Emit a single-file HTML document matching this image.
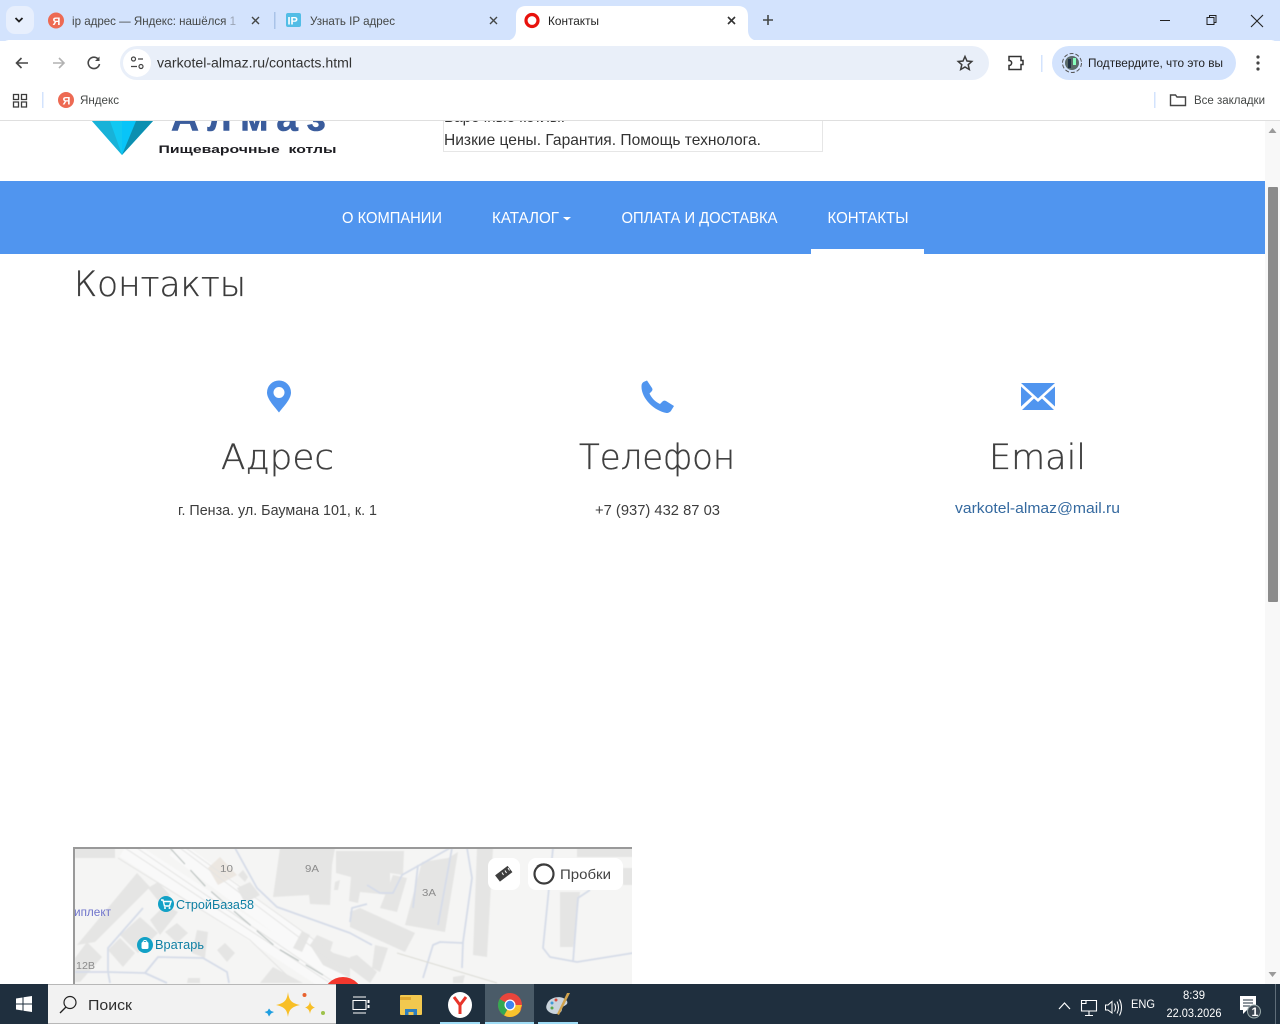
<!DOCTYPE html>
<html lang="ru"><head><meta charset="utf-8"><title>Контакты</title>
<style>
html,body{margin:0;padding:0;width:1280px;height:1024px;overflow:hidden;background:#fff}
svg{display:block;position:absolute;left:0;top:0}
text{font-family:"Liberation Sans","Noto Sans CJK SC",sans-serif}
.h{font-family:"DejaVu Sans","Liberation Sans",sans-serif;font-weight:200;stroke:#3f3f3f;stroke-width:.35px}
</style></head><body>
<svg width="1280" height="1024" viewBox="0 0 1280 1024" xmlns="http://www.w3.org/2000/svg">
<defs><filter id="soft" x="-2%" y="-2%" width="104%" height="104%"><feGaussianBlur stdDeviation="0.5"/></filter></defs>
<rect width="1280" height="1024" fill="#fff"/>

<!-- page: header -->
<g>
<path d="M92 121H153L122 155Z" fill="#12c8f2"/>
<path d="M92 121H110L122 155Z" fill="#18b2d8"/>
<path d="M122 121H136L122 155Z" fill="#08c4f8"/>
<path d="M136 121H153L122 155Z" fill="#0c8fb0"/>
<text x="171" y="130.500" font-size="38" font-weight="700" fill="#3a5c9c" stroke="#3a5c9c" stroke-width=".6" letter-spacing="8" textLength="163" lengthAdjust="spacingAndGlyphs">Алмаз</text>
<text x="158.500" y="153" font-family="DejaVu Sans" font-size="11" font-weight="700" fill="#1d1d22" textLength="178" lengthAdjust="spacingAndGlyphs" xml:space="preserve">Пищеварочные  котлы</text>
<rect x="443.500" y="110" width="379" height="41.500" fill="none" stroke="#e6e6e6"/>
<text x="444" y="122" font-size="16" fill="#333" textLength="121" lengthAdjust="spacingAndGlyphs">Варочные котлы.</text>
<text x="444" y="145" font-size="16" fill="#333" textLength="317" lengthAdjust="spacingAndGlyphs">Низкие цены. Гарантия. Помощь технолога.</text>
</g>

<!-- nav -->
<rect x="0" y="181" width="1265" height="73" fill="#5095ef"/>
<rect x="811" y="249" width="113" height="5" fill="#fff"/>
<g font-size="15.500" fill="#fff">
<text x="342" y="223" textLength="100" lengthAdjust="spacingAndGlyphs">О КОМПАНИИ</text>
<text x="492" y="223" textLength="67" lengthAdjust="spacingAndGlyphs">КАТАЛОГ</text>
<text x="621.500" y="223" textLength="156" lengthAdjust="spacingAndGlyphs">ОПЛАТА И ДОСТАВКА</text>
<text x="827.500" y="223" textLength="81" lengthAdjust="spacingAndGlyphs">КОНТАКТЫ</text>
</g>
<path d="M563 217h8l-4 3.500z" fill="#fff"/>

<!-- content -->
<text class="h" x="74" y="296" font-size="35" fill="#3b3b3b" textLength="172" lengthAdjust="spacingAndGlyphs">Контакты</text>

<path fill-rule="evenodd" fill="#5095ef" d="M279 412.500C275 407 267 399.500 267 392.500A12 12 0 0 1 291 392.500C291 399.500 283 407 279 412.500ZM279 387A5.500 5.500 0 1 0 279.010 398A5.500 5.500 0 1 0 279 387Z"/>
<path fill="#5095ef" d="M647 380.500L652 388C652.800 389.300 652.500 390.500 651.500 391.500L649.500 393.500C651.500 398 655.500 402 660 404L662.500 401.500C663.500 400.500 664.800 400.300 666 401L674 406L671.500 410C670.500 412 668.500 413 666.500 413C654 411 641 398 641.500 386C641.500 384 642.500 382.500 644 381.800Z"/>
<path fill="#5095ef" d="M1021 383H1055L1038 398.500ZM1021 386.500L1032 396.500L1021 406.500ZM1055 386.500V406.500L1044 396.500ZM1034 398.500L1038 402L1042 398.500L1054 410H1022Z"/>

<g font-size="34.500" fill="#3f3f3f">
<text class="h" x="221" y="469" textLength="113" lengthAdjust="spacingAndGlyphs">Адрес</text>
<text class="h" x="579" y="469" textLength="156" lengthAdjust="spacingAndGlyphs">Телефон</text>
<text class="h" x="989" y="469" textLength="97" lengthAdjust="spacingAndGlyphs">Email</text>
</g>
<g font-size="15" fill="#3d3d3d">
<text x="178" y="515" textLength="199" lengthAdjust="spacingAndGlyphs">г. Пенза. ул. Баумана 101, к. 1</text>
<text x="595" y="515" textLength="125" lengthAdjust="spacingAndGlyphs">+7 (937) 432 87 03</text>
</g>
<text x="955" y="513" font-size="15" fill="#34699f" textLength="165" lengthAdjust="spacingAndGlyphs">varkotel-almaz@mail.ru</text>

<!-- map -->
<svg x="73" y="847" width="559" height="137" viewBox="73 847 559 137">
<rect x="73" y="847" width="559" height="137" fill="#f5f5f4"/>
<g filter="url(#soft)">
<path d="M125 848L335 985" fill="none" stroke="#f9f9f9" stroke-width="20"/>
<path d="M175 848L345 975" fill="none" stroke="#f9f9f9" stroke-width="18"/>
<g fill="#e5e5e4">
<path d="M75 848H115V858H75Z"/>
<path d="M77 945L137 873L150 887L95 942Z"/>
<path d="M75 958L87 942L102 957L80 982H75Z"/>
<path d="M148 888L158 882L170 895L160 903Z"/>
<path d="M120 935L140 917L158 933L138 953Z"/>
<path d="M150 920L165 905L178 912L160 935Z"/>
<path d="M108 950L120 938L135 953L123 967Z"/>
<path d="M165 932L177 923L188 933L177 943Z"/>
<path d="M197 930L208 932L205 958L192 953Z"/>
<path d="M217 950L225 943L235 953L227 962Z"/>
<path d="M238 875L243 870L248 877L245 882Z"/>
<path d="M237 888L250 882L260 895L245 903Z"/>
<path d="M273 897L280 848H335L332 865L330 905L310 904L309 895Z"/>
<path d="M335 882L340 880L338 890L334 890Z"/>
<path d="M336 851H404L403 875L390 873L390 895L360 892L358 903L349 901L351 877L336 873Z"/>
<path d="M293 948L302 931L310 935L302 952Z"/>
<path d="M310 945L317 935L333 942L330 952L350 958L350 978L323 965Z"/>
<path d="M260 983L273 967L303 983Z"/>
<path d="M187 983L188 978H200V983Z"/>
<path d="M405 925L422 862L448 858L458 852L445 932Z"/>
<path d="M380 908L393 875L407 878L397 912Z"/>
<path d="M350 912L360 908L415 933L405 952L350 927Z"/>
<path d="M375 945L388 948L380 972L372 968Z"/>
<path d="M350 957L357 955L377 972L370 983L350 968Z"/>
<path d="M477 848H493L487 957L473 955Z"/>
<path d="M560 892H580L573 947H560Z"/>
<path d="M577 848H633V857H577Z"/>
<path d="M623 868H633V885H623Z"/>
<path d="M453 977L465 975L463 983H453Z"/>
</g>
<path d="M208 868L220 857L237 875L218 885Z" fill="#ece7e1"/>
<g fill="none" stroke="#d6dce8" stroke-width="1.800" stroke-linejoin="round">
<path d="M235 848L257 888L277 907L350 933L372 945"/>
<path d="M367 885L380 893H393L402 875L450 848"/>
<path d="M418 865L413 908"/>
<path d="M452 848L438 925"/>
<path d="M467 848L472 878L463 942L462 968"/>
<path d="M350 922L352 908L367 904"/>
<path d="M423 978L433 945L440 942L463 943"/>
<path d="M553 848L543 948L550 957L577 962L633 953"/>
<path d="M573 962L578 898L590 890"/>
<path d="M143 908L108 948V972L110 983"/>
<path d="M75 972H107L145 973L158 957L203 958L227 972L229 983"/>
<path d="M145 973L167 983"/>
</g>
<g fill="none" stroke="#e4e4e3" stroke-width="1">
<path d="M125 848L330 983"/><path d="M137 848L335 983"/><path d="M180 848L340 968"/>
<path d="M186 848L345 962"/><path d="M118 858L250 940L295 983"/>
</g>
<path d="M170 848L207 888L277 948L323 975" fill="none" stroke="#bcc3c1" stroke-width="1.200" stroke-dasharray="22 8"/>
<path d="M397 953L497 983" fill="none" stroke="#dcdcd6"/>
</g>
<circle cx="343" cy="997" r="20" fill="#f2372d"/>

<g font-size="10" fill="#8b8b8b">
<text x="220" y="872" textLength="13" lengthAdjust="spacingAndGlyphs">10</text>
<text x="305" y="872" textLength="14" lengthAdjust="spacingAndGlyphs">9А</text>
<text x="422" y="896" textLength="14" lengthAdjust="spacingAndGlyphs">3А</text>
<text x="76" y="969" textLength="19" lengthAdjust="spacingAndGlyphs">12В</text>
</g>
<text x="74" y="916" font-size="12" fill="#6f74cb" textLength="37" lengthAdjust="spacingAndGlyphs">иплект</text>

<circle cx="166" cy="904" r="8" fill="#12a1c6"/>
<path d="M161 900h2l1.500 6h5l1.500-4.500h-7" fill="none" stroke="#fff" stroke-width="1.400"/>
<circle cx="165" cy="908" r="1" fill="#fff"/><circle cx="169.500" cy="908" r="1" fill="#fff"/>
<text x="176" y="909" font-size="13" fill="#0e7fa3" textLength="78" lengthAdjust="spacingAndGlyphs">СтройБаза58</text>
<circle cx="145" cy="945" r="8" fill="#12a1c6"/>
<rect x="141.500" y="942" width="7" height="7" rx="1.500" fill="#fff"/>
<path d="M143 942.500a2 2 0 0 1 4 0" fill="none" stroke="#fff"/>
<text x="155" y="949" font-size="13" fill="#0e7fa3" textLength="49" lengthAdjust="spacingAndGlyphs">Вратарь</text>

<rect x="488" y="858" width="32" height="32" rx="8" fill="#fff"/>
<path d="M497.500 878.500L510 869" stroke="#3e3e3e" stroke-width="8"/>
<path d="M502 872.500l1.500 2.500M505 870.500l1.500 2.500M508 868l1.500 2.500" stroke="#fff" stroke-width="1"/>
<rect x="528" y="858" width="95" height="32" rx="8" fill="#fff"/>
<circle cx="544" cy="874" r="9.500" fill="none" stroke="#3c3c3c" stroke-width="2.200"/>
<path d="M537 866.500a10 10 0 0 1 14 1" fill="none" stroke="#3c3c3c" stroke-width="1.500"/>
<text x="560" y="879" font-size="14" fill="#444" textLength="51" lengthAdjust="spacingAndGlyphs">Пробки</text>
<path d="M74 984V848H632" fill="none" stroke="#999" stroke-width="2"/>
</svg>

<!-- scrollbar -->
<rect x="1265" y="121" width="15" height="863" fill="#f8f8f8"/>
<rect x="1268" y="187" width="10" height="415" rx="1" fill="#8b8b8b"/>
<path d="M1268.500 133L1272.500 128L1276.500 133Z" fill="#9a9a9a"/>
<path d="M1268.500 972L1272.500 977L1276.500 972Z" fill="#9a9a9a"/>

<!-- browser: tab strip -->
<rect x="0" y="0" width="1280" height="41" fill="#d3e3fd"/>
<rect x="6" y="6" width="28" height="28" rx="9" fill="#e7effd"/>
<path d="M15.500 18L19 21.500L22.500 18" fill="none" stroke="#1f1f1f" stroke-width="1.800"/>
<circle cx="56" cy="20.500" r="8" fill="#ed6a53"/>
<text x="52.500" y="25" font-size="11" font-weight="700" fill="#fff">Я</text>
<text x="72" y="25" font-size="12" fill="#444746" textLength="164" lengthAdjust="spacingAndGlyphs">ip адрес — Яндекс: нашёлся 1</text>
<rect x="229" y="10" width="10" height="20" fill="#d3e3fd" opacity=".6"/>
<path d="M252 17l7 7m0-7l-7 7" stroke="#444746" stroke-width="1.400"/>
<rect x="274" y="12" width="1.500" height="17" fill="#a9c3e8"/>
<rect x="286" y="13" width="15" height="14" rx="2" fill="#52bde6"/>
<text x="287.500" y="24.500" font-size="11" font-weight="700" fill="#fff">IP</text>
<text x="310" y="25" font-size="12" fill="#444746" textLength="85" lengthAdjust="spacingAndGlyphs">Узнать IP адрес</text>
<path d="M490 17l7 7m0-7l-7 7" stroke="#444746" stroke-width="1.400"/>
<path d="M504 41C512 41 516 37 516 30V16C516 9 520 6 526 6H738C744 6 748 9 748 16V30C748 37 752 41 760 41Z" fill="#fff"/>
<circle cx="532" cy="20.500" r="6" fill="none" stroke="#e8120c" stroke-width="3.200"/>
<text x="548" y="25" font-size="12" fill="#1f1f1f" textLength="51" lengthAdjust="spacingAndGlyphs">Контакты</text>
<path d="M728 17l7 7m0-7l-7 7" stroke="#333" stroke-width="1.600"/>
<path d="M768 15v10m-5-5h10" stroke="#444746" stroke-width="1.600"/>
<path d="M1160 20.500h10" stroke="#222" stroke-width="1"/>
<path d="M1207 17.500h7v7h-7zM1209.500 17.500v-2h6.500v7h-2" fill="none" stroke="#222" stroke-width="1"/>
<path d="M1251 15l12 12m0-12l-12 12" stroke="#222" stroke-width="1.100"/>

<!-- browser: toolbar -->
<path d="M0 52C0 45 3 40 10 40H1270C1277 40 1280 45 1280 52V120H0Z" fill="#fff"/>
<rect x="0" y="120" width="1280" height="1" fill="#dfdfdf"/>
<path d="M28 63H17M21.500 58L16.500 63L21.500 68" fill="none" stroke="#474747" stroke-width="1.600"/>
<path d="M64 63H53M59 58L64 63L59 68" fill="none" stroke="#b2b2b2" stroke-width="1.600"/>
<path d="M98.500 59.500A5.700 5.700 0 1 0 99.500 64" fill="none" stroke="#474747" stroke-width="1.600"/>
<path d="M99.500 56.500V61H95Z" fill="#474747"/>
<rect x="120" y="46" width="869" height="34" rx="17" fill="#e9eff9"/>
<circle cx="137" cy="63" r="14" fill="#fff"/>
<circle cx="133.500" cy="59" r="2" fill="none" stroke="#444" stroke-width="1.200"/>
<path d="M138 59h5M131 66.500h6" stroke="#444" stroke-width="1.300"/>
<circle cx="141" cy="66.500" r="2" fill="none" stroke="#444" stroke-width="1.200"/>
<text x="157" y="67.500" font-size="13.500" fill="#333" textLength="195" lengthAdjust="spacingAndGlyphs">varkotel-almaz.ru/contacts.html</text>
<path d="M965 56.500L967 61L971.800 61.500L968.200 64.700L969.300 69.500L965 67L960.700 69.500L961.800 64.700L958.200 61.500L963 61Z" fill="none" stroke="#3c3c3c" stroke-width="1.500"/>
<path d="M1009 56.500H1021V60.500H1023V64.500H1021V69.500H1009V65.500C1012.500 65.500 1012.500 60.500 1009 60.500Z" fill="none" stroke="#333" stroke-width="1.500"/>
<rect x="1041" y="55" width="1.500" height="17" fill="#d3e3fd"/>
<rect x="1052" y="46" width="184" height="34" rx="17" fill="#d3e3fd"/>
<circle cx="1072" cy="63" r="9.500" fill="none" stroke="#555" stroke-width="1" stroke-dasharray="4 2"/>
<circle cx="1072" cy="63" r="7" fill="#5a6a68"/>
<path d="M1068 59h3v9h-3z" fill="#234"/><path d="M1073 58h3v7h-3z" fill="#8fb"/>
<text x="1088" y="67" font-size="12" fill="#1f1f1f" textLength="135" lengthAdjust="spacingAndGlyphs">Подтвердите, что это вы</text>
<circle cx="1258" cy="57" r="1.600" fill="#444"/><circle cx="1258" cy="63" r="1.600" fill="#444"/><circle cx="1258" cy="69" r="1.600" fill="#444"/>

<!-- bookmarks -->
<path d="M13.500 94.500h5v5h-5zM21.500 94.500h5v5h-5zM13.500 102h5v5h-5zM21.500 102h5v5h-5z" fill="none" stroke="#3c3c3c" stroke-width="1.300"/>
<rect x="42" y="92" width="1.500" height="16" fill="#d3e3fd"/>
<circle cx="66" cy="100" r="8" fill="#ed6a53"/>
<text x="62.500" y="104.500" font-size="11" font-weight="700" fill="#fff">Я</text>
<text x="80" y="104" font-size="11.500" fill="#444746" textLength="39" lengthAdjust="spacingAndGlyphs">Яндекс</text>
<rect x="1154" y="92" width="1.500" height="16" fill="#d3e3fd"/>
<path d="M1170.500 95H1175.500L1177 97H1185.500V105.500H1170.500Z" fill="none" stroke="#444" stroke-width="1.400"/>
<text x="1194" y="104" font-size="11.500" fill="#444746" textLength="71" lengthAdjust="spacingAndGlyphs">Все закладки</text>

<!-- taskbar -->
<rect x="0" y="984" width="1280" height="40" fill="#1f2f3e"/>
<path d="M16 998.500L22.500 997.500V1003.500H16ZM23.500 997.300L32 996V1003.500H23.500ZM16 1004.500H22.500V1010.500L16 1009.500ZM23.500 1004.500H32V1012L23.500 1010.700Z" fill="#fff"/>
<rect x="48" y="984" width="288" height="40" fill="#f2f2f2"/>
<rect x="48" y="984" width="288" height="1" fill="#b8b8b8"/><rect x="48" y="1023" width="288" height="1" fill="#b8b8b8"/>
<circle cx="70" cy="1002.500" r="6" fill="none" stroke="#222" stroke-width="1.200"/>
<path d="M66 1007L60 1013" stroke="#222" stroke-width="1.300"/>
<text x="88" y="1010" font-size="15" fill="#2f2f2f" textLength="44" lengthAdjust="spacingAndGlyphs">Поиск</text>
<path d="M288 992C289 1000 291 1003 300 1005C291 1007 289 1010 288 1017C287 1010 285 1007 276 1005C285 1003 287 1000 288 992Z" fill="#f8bf26"/>
<path d="M310 1001C310.500 1005 312 1006.500 315 1007.500C312 1008.500 310.500 1010 310 1014C309.500 1010 308 1008.500 305 1007.500C308 1006.500 309.500 1005 310 1001Z" fill="#f8bf26"/>
<path d="M269 1008.500L271 1011L274 1012L271 1013.500L269 1016.500L267.500 1013.500L264.500 1012L267.500 1011Z" fill="#1f9ee0"/>
<circle cx="304.500" cy="995" r="2" fill="#e8622f"/><circle cx="323" cy="1013" r="2" fill="#9ec24b"/>
<path d="M353 997H366M353 1013H366M353 1000.500H366V1009.500H353Z" fill="none" stroke="#fff" stroke-width="1.100"/>
<rect x="367.500" y="1000" width="2" height="3" fill="#fff"/><rect x="367.500" y="1005" width="2" height="3" fill="#fff"/>
<rect x="400" y="995" width="22" height="20" rx="1" fill="#f2c84f"/>
<path d="M400 997H411V1000H400Z" fill="#e0a830"/>
<rect x="405" y="1009" width="12" height="6" fill="#2f7fbf"/><rect x="408.500" y="1012" width="5" height="3" fill="#f2c84f"/>
<ellipse cx="460" cy="1005" rx="12" ry="13" fill="#fff"/>
<path d="M454 997L460 1005L466 997M460 1005V1014" fill="none" stroke="#e8342a" stroke-width="3"/>
<rect x="485" y="984" width="49" height="40" fill="#4a5b68"/>
<circle cx="510" cy="1005" r="12" fill="#e8453c"/>
<path d="M510 1005L520.400 1011A12 12 0 0 1 504 1015.400Z" fill="#f8c42d"/>
<path d="M510 1005L504 1015.400A12 12 0 0 1 499.600 999Z" fill="#34a853"/>
<path d="M510 1005L520.400 1011A12 12 0 0 1 522 1005Z" fill="#f8c42d"/>
<circle cx="510" cy="1005" r="5.500" fill="#fff"/><circle cx="510" cy="1005" r="4.200" fill="#3f84f0"/>
<path d="M547 1004C550 996 563 995 567 1001C569 1006 562 1005 562 1009C562 1014 555 1015 551 1013C547 1011 545 1008 547 1004Z" fill="#c9d3dc"/>
<path d="M567 993L570 993L559 1015L557 1014Z" fill="#d0a24c"/>
<circle cx="552" cy="1003" r="1.500" fill="#3f9ad6"/><circle cx="556" cy="1000" r="1.500" fill="#d84a3c"/><circle cx="552" cy="1008" r="1.500" fill="#58a84a"/>
<rect x="440" y="1022" width="40" height="2" fill="#9fdcf5"/><rect x="485" y="1022" width="49" height="2" fill="#9fdcf5"/><rect x="538" y="1022" width="40" height="2" fill="#9fdcf5"/>

<path d="M1059 1009L1064.500 1003L1070 1009" fill="none" stroke="#fff" stroke-width="1.200"/>
<path d="M1081.500 1000.500H1096.500V1011H1081.500ZM1089 1011V1015M1085 1015.500H1093M1081.500 1003.500H1086V1000.500" fill="none" stroke="#fff" stroke-width="1.100"/>
<path d="M1105.500 1005H1108L1112 1001.500V1013L1108 1010H1105.500Z" fill="none" stroke="#fff" stroke-width="1"/>
<path d="M1114.500 1003.500Q1116.500 1007.500 1114.500 1011.500M1117 1001.500Q1120 1007.500 1117 1013.500M1119.500 999.500Q1123.500 1007.500 1119.500 1015.500" fill="none" stroke="#fff" stroke-width="1"/>
<text x="1131" y="1008" font-size="12" fill="#fff" textLength="24" lengthAdjust="spacingAndGlyphs">ENG</text>
<text x="1183" y="999" font-size="12" fill="#fff" textLength="22" lengthAdjust="spacingAndGlyphs">8:39</text>
<text x="1166.500" y="1017" font-size="12" fill="#fff" textLength="55" lengthAdjust="spacingAndGlyphs">22.03.2026</text>
<path d="M1240 996H1256V1010H1247L1243 1014V1010H1240Z" fill="#fff"/>
<path d="M1243 1000H1253M1243 1003H1253M1243 1006H1250" stroke="#1f2f3e" stroke-width="1"/>
<circle cx="1254" cy="1011.500" r="6.500" fill="#3a4651" stroke="#9aa" stroke-width="1"/>
<text x="1251.500" y="1016" font-size="12" font-weight="700" fill="#fff">1</text>
<rect x="1275" y="984" width="1" height="40" fill="#5f6d79"/>
</svg>
</body></html>
